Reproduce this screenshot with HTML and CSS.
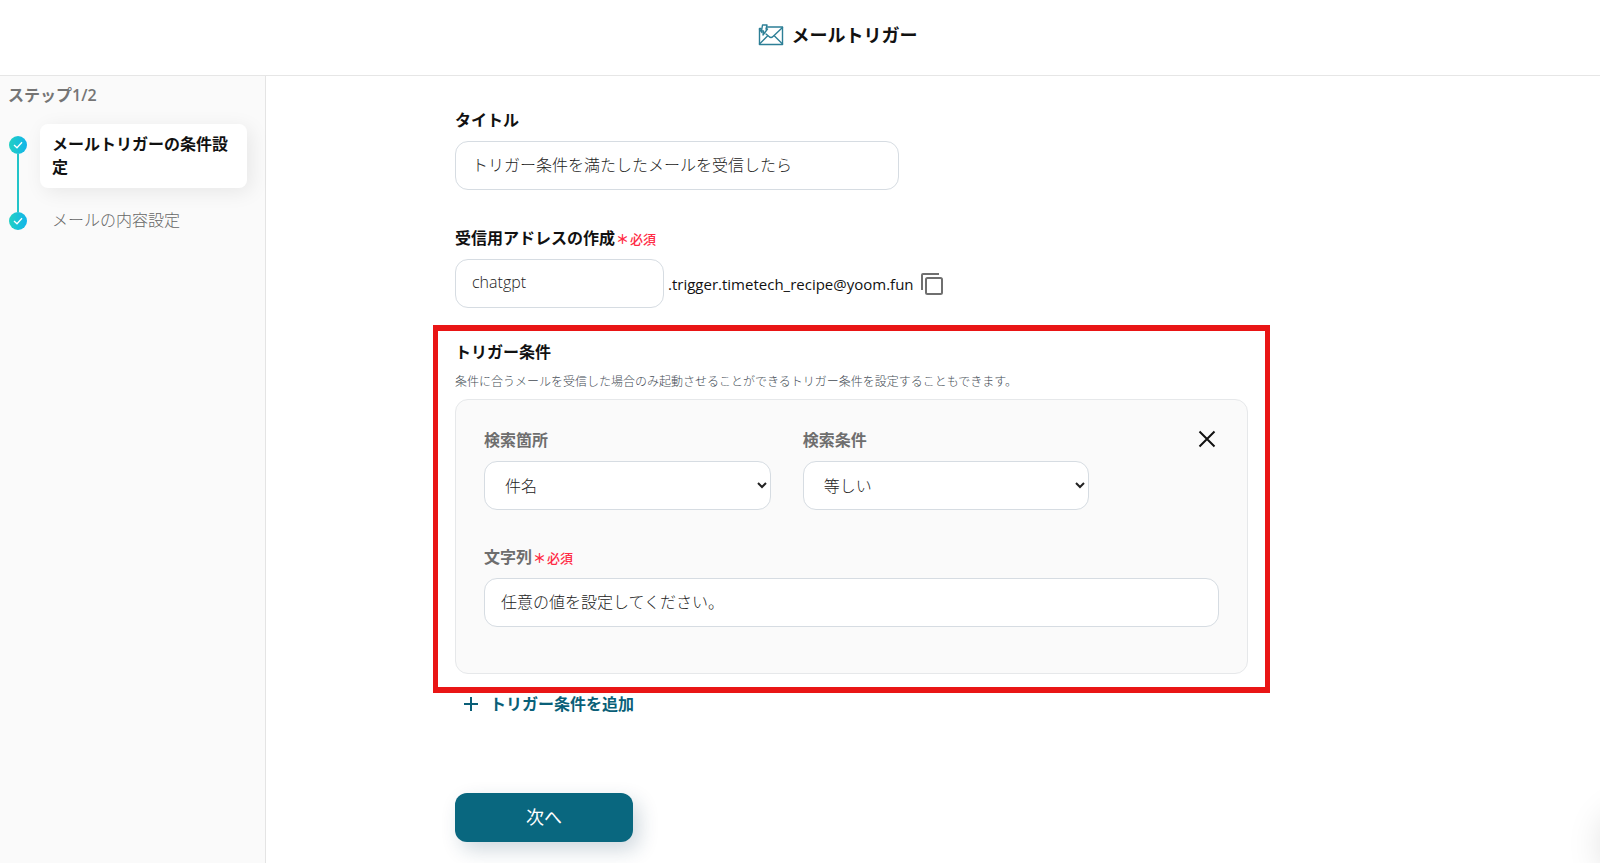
FILE: index.html
```html
<!DOCTYPE html>
<html lang="ja">
<head>
   <meta charset="UTF-8">
   <meta name="viewport" content="width=device-width, initial-scale=1.0">
   <title>メールトリガー</title>
   <link rel="stylesheet" href="styles.css">
</head>
<body>
   <header class="header">
      <svg class="header-icon" width="26" height="22" viewBox="0 0 26 22" fill="none" stroke="#2d7f96" stroke-width="1.4" stroke-linejoin="round" stroke-linecap="round">
         <path d="M3 4.500H1.500V20.500H24.500V3H9"/>
         <path d="M24.500 3.500L15 12.500Q13 14.500 11 12.500L8 10"/>
         <path d="M1.500 20L9.500 12M24.500 20L16.500 12M1.500 5L4 8.500"/>
         <path d="M4.500 1H9L8 5H9.500L5 11L5.500 7H3.500Z"/>
      </svg>
      <h1>メールトリガー</h1>
   </header>

   <div class="layout">
      <aside class="sidebar">
         <p class="step-count">ステップ1/2</p>
         <ol class="steps">
            <li class="step active">
               <div class="marker">
                  <svg class="dot" width="18" height="18" viewBox="0 0 18 18">
                     <defs>
                        <linearGradient id="dotFill" x1="0" y1="0" x2="1" y2="0">
                           <stop offset="0" stop-color="#22d0c3"/>
                           <stop offset="1" stop-color="#12b4ea"/>
                        </linearGradient>
                     </defs>
                     <circle cx="9" cy="9" r="9" fill="url(#dotFill)"/>
                     <path d="M5 9L8 11.800L13 6.200" fill="none" stroke="#fff" stroke-width="1.300"/>
                  </svg>
               </div>
               <a href="#" class="step-label">メールトリガーの条件設定</a>
            </li>
            <li class="step">
               <div class="marker">
                  <svg class="dot" width="18" height="18" viewBox="0 0 18 18">
                     <circle cx="9" cy="9" r="9" fill="url(#dotFill)"/>
                     <path d="M5 9L8 11.800L13 6.200" fill="none" stroke="#fff" stroke-width="1.300"/>
                  </svg>
               </div>
               <a href="#" class="step-label">メールの内容設定</a>
            </li>
         </ol>
      </aside>

      <main class="main">
         <form class="form">
            <div class="field title-field">
               <label for="title">タイトル</label>
               <input type="text" id="title" value="トリガー条件を満たしたメールを受信したら">
            </div>

            <div class="field">
               <label for="address">受信用アドレスの作成<span class="required"><span class="mark">＊</span>必須</span></label>
               <div class="address-row">
                  <input type="text" id="address" value="chatgpt">
                  <span class="domain">.trigger.timetech_recipe@yoom.fun</span>
                  <button type="button" class="icon-button" aria-label="コピー">
                     <svg width="24" height="24" viewBox="0 0 24 24" fill="none" stroke="#6f6f6f" stroke-width="2">
                        <path d="M2 18V3Q2 2 3 2H19"/>
                        <rect x="6" y="6" width="16" height="16" rx="1.500"/>
                     </svg>
                  </button>
               </div>
            </div>

            <section class="trigger">
               <h2>トリガー条件</h2>
               <p class="note">条件に合うメールを受信した場合のみ起動させることができるトリガー条件を設定することもできます。</p>
               <div class="card">
                  <div class="card-row">
                     <div class="field">
                        <label for="place">検索箇所</label>
                        <select id="place">
                           <option>件名</option>
                        </select>
                     </div>
                     <div class="field">
                        <label for="condition">検索条件</label>
                        <select id="condition">
                           <option>等しい</option>
                        </select>
                     </div>
                     <button type="button" class="icon-button close" aria-label="削除">
                        <svg width="18" height="18" viewBox="0 0 18 18" fill="none" stroke="#111" stroke-width="2">
                           <path d="M1.500 1.500L16.500 16.500M16.500 1.500L1.500 16.500"/>
                        </svg>
                     </button>
                  </div>
                  <div class="field">
                     <label for="keyword">文字列<span class="required"><span class="mark">＊</span>必須</span></label>
                     <input type="text" id="keyword" value="任意の値を設定してください。">
                  </div>
               </div>
            </section>

            <button type="button" class="add-button">
               <svg width="14" height="14" viewBox="0 0 14 14" fill="none" stroke="#0a5f78" stroke-width="2">
                  <path d="M7 0V14M0 7H14"/>
               </svg>
               トリガー条件を追加
            </button>

            <button type="button" class="next-button">次へ</button>
         </form>
      </main>
   </div>

   <div class="chat-shadow"></div>
</body>
</html>
```
FILE: styles.css
```css
* {
   box-sizing: border-box;
}
body {
   margin: 0;
   min-height: 100vh;
   display: flex;
   flex-direction: column;
   font-family: "Open Sans", "Noto Sans CJK JP", sans-serif;
   font-size: 16px;
   line-height: 24px;
   color: #111;
   background: #fff;
}
h1, h2, p, ol {
   margin: 0;
   padding: 0;
}
button, input, select {
   font: inherit;
}
button {
   border: none;
   padding: 0;
   background: none;
   cursor: pointer;
}

/* header */
.header {
   display: flex;
   align-items: center;
   justify-content: center;
   gap: 8px;
   height: 76px;
   padding: 0 0 6px 75px;
   border-bottom: 1px solid #e6e6e6;
}
.header h1 {
   font-size: 18px;
   font-weight: 600;
}
.layout {
   display: flex;
   flex: 1;
}

/* sidebar */
.sidebar {
   flex: 0 0 266px;
   padding: 7px 18px 0 8px;
   background: #fafafa;
   border-right: 1px solid #e4e4e4;
}
.step-count {
   font-weight: 600;
   color: #757575;
}
.steps {
   list-style: none;
   margin-top: 17px;
}
.step {
   display: flex;
   gap: 12px;
}
.marker {
   display: flex;
   flex-direction: column;
   align-items: center;
   flex: 0 0 20px;
}
.marker::before {
   content: "";
   width: 2px;
   height: 12px;
   background: #22c4c9;
}
.marker::after {
   content: "";
   width: 2px;
   flex: 1;
   background: #22c4c9;
}
.step:first-child .marker::before,
.step:last-child .marker::after {
   background: transparent;
}
.dot {
   display: block;
}
.step-label {
   flex: 1;
   padding: 9px 12px;
   line-height: 23px;
   font-weight: 300;
   color: #666;
   text-decoration: none;
   border-radius: 8px;
}
.active .step-label {
   margin-bottom: 12px;
   font-weight: 600;
   color: #111;
   background: #fff;
   box-shadow: 4px 4px 20px rgba(0, 0, 0, 0.08);
}

/* form */
.main {
   flex: 1;
   min-width: 0;
   padding: 31px 24px 22px 189px;
}
.form {
   display: flex;
   flex-direction: column;
   align-items: flex-start;
   max-width: 793px;
}
.field {
   display: flex;
   flex-direction: column;
   gap: 8px;
}
.field label {
   line-height: 26px;
   font-weight: 600;
}
.title-field {
   width: 56%;
   margin-bottom: 35px;
}
input, select {
   width: 100%;
   height: 49px;
   padding: 0 16px 3px;
   font-weight: 300;
   color: #222;
   background: #fff;
   border: 1px solid #d6dce2;
   border-radius: 13px;
}
.field .required {
   margin-left: 1px;
   font-size: 13px;
   line-height: 1;
   font-weight: 500;
   color: #ff2b45;
}
.mark {
   margin-right: 1px;
   font-weight: 700;
}
.address-row {
   display: flex;
   align-items: center;
}
.address-row input {
   width: 209px;
}
.domain {
   margin: 0 6px 0 4px;
   font-size: 15px;
}
.icon-button svg {
   display: block;
}
.trigger {
   align-self: stretch;
   margin: 17px -22px 0;
   padding: 9px 17px 13px;
   border: solid #e91515;
   border-width: 6px 5px;
}
.trigger h2 {
   font-size: 16px;
   font-weight: 600;
}
.note {
   margin: 8px 0 7px;
   font-size: 12px;
   line-height: 20px;
   font-weight: 300;
   color: #444c55;
}
.card {
   padding: 27px 28px 46px;
   background: #fafafa;
   border: 1px solid #e6e8ea;
   border-radius: 13px;
}
.card label {
   color: #6e6e6e;
}
.card-row {
   display: flex;
   gap: 32px;
   margin-bottom: 34px;
}
.card-row .field {
   flex: 0 0 39%;
}
.card select {
   padding: 0 0 0 16px;
}
.card-row .close {
   align-self: flex-start;
   margin: 3px 3px 0 auto;
}
.add-button {
   display: flex;
   align-items: center;
   gap: 12px;
   padding: 0 9px;
   line-height: 22px;
   font-weight: 600;
   color: #0a5f78;
}
.next-button {
   width: 178px;
   height: 49px;
   margin-top: 78px;
   padding-bottom: 2px;
   font-size: 18px;
   color: #fff;
   background: #09677f;
   border-radius: 12px;
   box-shadow: 6px 8px 20px rgba(20, 60, 90, 0.2);
}

/* edge of the chat launcher */
.chat-shadow {
   position: fixed;
   right: -60px;
   bottom: -8px;
   width: 54px;
   height: 54px;
   border-radius: 50%;
   box-shadow: 0 0 40px rgba(0, 0, 0, 0.2);
}
```
